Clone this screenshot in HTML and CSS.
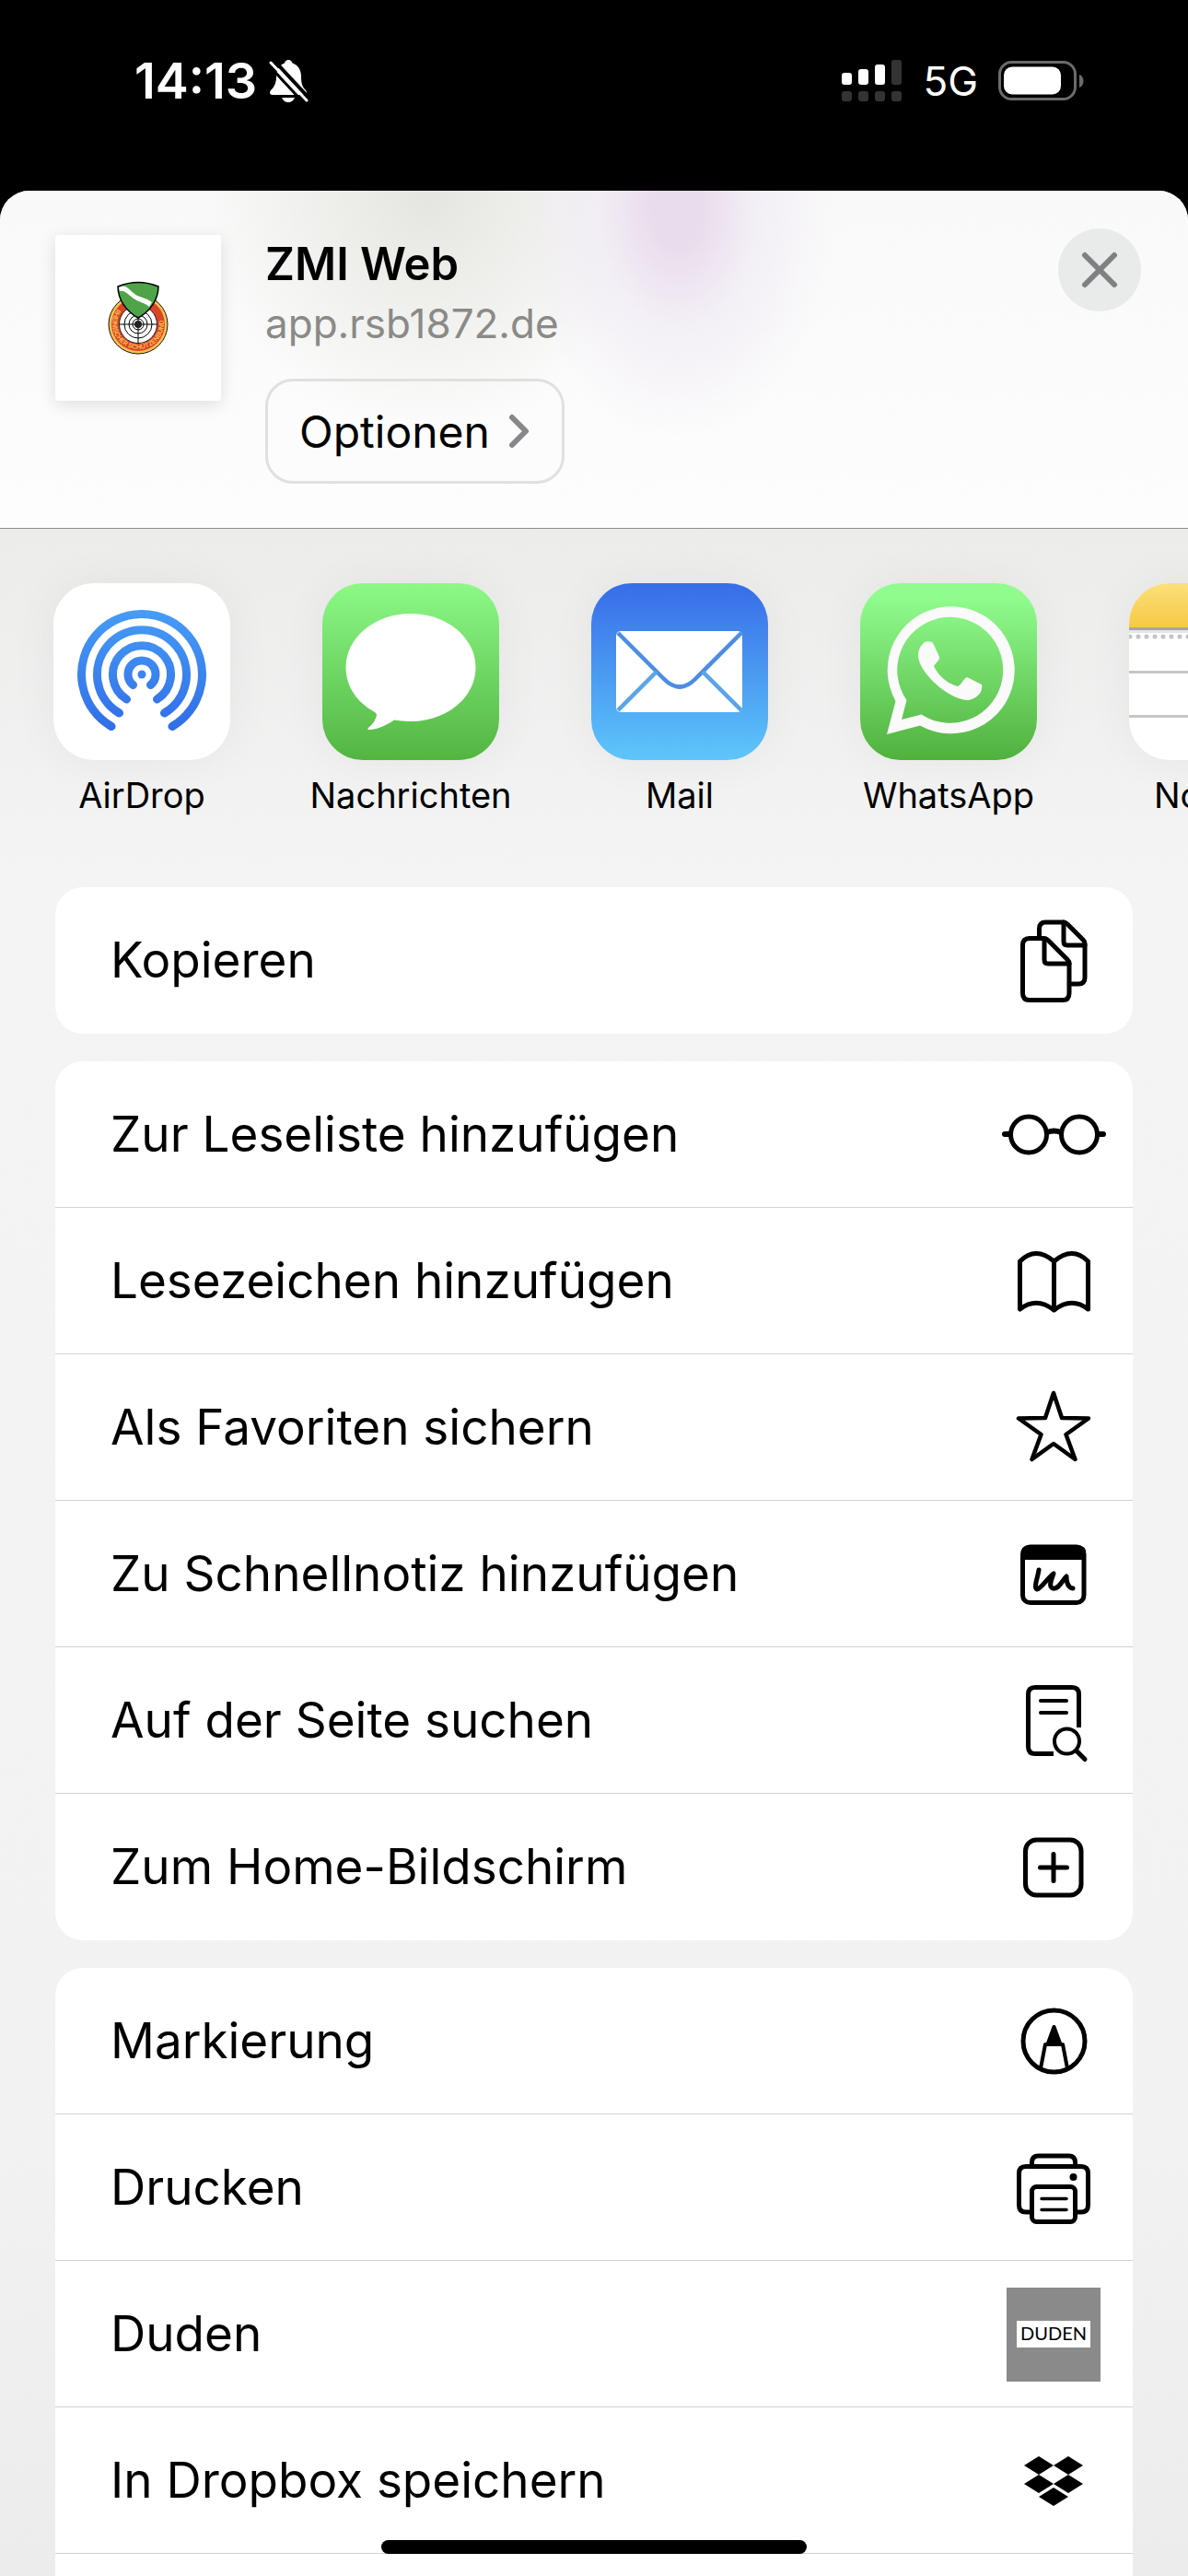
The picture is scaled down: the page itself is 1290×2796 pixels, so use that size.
FILE: index.html
```html
<!DOCTYPE html>
<html lang="de">
<head>
    <meta charset="UTF-8">
    <meta name="viewport" content="width=device-width, initial-scale=1.0">
    <title>ZMI Web</title>
    <link rel="stylesheet" href="styles.css">
</head>
<body>

<div class="status-bar">
    <div class="status-left">
        <span class="time">14:13</span>
        <svg width="44" height="48" viewBox="0 0 44 48">
            <path d="M22 1c3 0 4 2 4.500 3.500C33 7 36 12 36 19c0 9 2 12 5 15 2 3 1 5-2 5H6c-4 0-5-2-3-5 4-4 6-8 6-15C9 12 12 7 18 4.500 18.500 2.500 20 1 22 1z" fill="#fff"/>
            <path d="M15 42h14c-1 3-4 5-7 5s-6-2-7-5z" fill="#fff"/>
            <path d="M6 1l38 41" stroke="#000" stroke-width="4"/>
            <path d="M1 7l38 41" stroke="#000" stroke-width="3"/>
            <path d="M3 4l39 41" stroke="#fff" stroke-width="3" stroke-linecap="round"/>
        </svg>
    </div>
    <div class="status-right">
        <svg width="66" height="46" viewBox="0 0 66 46">
            <g fill="#fff">
                <rect x="0" y="14" width="11" height="13" rx="3"/>
                <rect x="18" y="10" width="11" height="17" rx="3"/>
                <rect x="36" y="5" width="11" height="22" rx="3"/>
            </g>
            <g fill="#333">
                <rect x="54" y="0" width="11" height="27" rx="3"/>
                <rect x="0" y="34" width="11" height="11" rx="3"/>
                <rect x="18" y="34" width="11" height="11" rx="3"/>
                <rect x="36" y="34" width="11" height="11" rx="3"/>
                <rect x="54" y="34" width="11" height="11" rx="3"/>
            </g>
        </svg>
        <span class="network">5G</span>
        <svg width="94" height="44" viewBox="0 0 94 44">
            <rect x="1.500" y="1.500" width="82" height="40" rx="13" fill="none" stroke="#6b6b6b" stroke-width="3"/>
            <rect x="6" y="6.500" width="62" height="30" rx="9" fill="#fff"/>
            <path d="M88 15c6 2 6 12 0 14z" fill="#6b6b6b"/>
        </svg>
    </div>
</div>

<div class="sheet">
    <header class="sheet-header">
        <div class="thumbnail">
            <svg width="180" height="180" viewBox="0 0 180 180">
                <circle cx="90" cy="97" r="32" fill="#f9c352" stroke="#1a1408" stroke-width="1"/>
                <circle cx="90" cy="97" r="29" fill="#da4527"/>
                <circle cx="90" cy="97" r="20.500" fill="#fff" stroke="#222"/>
                <path id="ring" d="M67 80a28 28 0 1 0 46 0" fill="none"/>
                <text class="ring-text"><textPath href="#ring">RHEINISCHER SCHÜTZENBUND</textPath></text>
                <g fill="none" stroke="#000" stroke-width="1">
                    <circle cx="90" cy="97" r="15"/>
                    <circle cx="90" cy="97" r="10"/>
                    <circle cx="90" cy="97" r="6"/>
                    <path d="M70 97h40M90 77v40"/>
                </g>
                <circle cx="90" cy="97" r="4" fill="#222"/>
                <path d="M68 56q22-9 44 0c0 14-9 27-22 34-13-7-22-20-22-34z" fill="#4fa447" stroke="#000" stroke-width="1.500"/>
                <path d="M69 57q5-3 9 0c5 4 8 8 14 10q7 2 13 6l-3 5c-6-5-11-5-17-9-7-5-9-9-15-8z" fill="#fff"/>
            </svg>
        </div>
        <div class="page-info">
            <h1>ZMI Web</h1>
            <p>app.rsb1872.de</p>
            <button class="options">
                Optionen
                <svg width="24" height="40" viewBox="0 0 24 40"><path d="M4 5l15 15-15 15" fill="none" stroke="#88888c" stroke-width="6" stroke-linecap="round" stroke-linejoin="round"/></svg>
            </button>
        </div>
        <button class="close" aria-label="Schließen">
            <svg width="40" height="40" viewBox="0 0 40 40"><path d="M4 4l32 32M36 4L4 36" stroke="#7f8082" stroke-width="6" stroke-linecap="round"/></svg>
        </button>
    </header>

    <div class="apps">
        <button class="app">
            <svg class="app-icon white" viewBox="0 0 192 192">
                <defs>
                    <linearGradient id="air" gradientUnits="userSpaceOnUse" x1="0" y1="28" x2="0" y2="162">
                        <stop offset="0" stop-color="#469df6"/>
                        <stop offset="1" stop-color="#316ce8"/>
                    </linearGradient>
                </defs>
                <g fill="none" stroke="url(#air)" stroke-width="9" stroke-linecap="round">
                    <path d="M63 155.500A65.500 65.500 0 1 1 129 155.500"/>
                    <path d="M71.500 141A48.500 48.500 0 1 1 120.500 141"/>
                    <path d="M79.500 126A31.500 31.500 0 1 1 112.500 126"/>
                    <path d="M86.500 110.500A15 15 0 1 1 105.500 110.500"/>
                </g>
                <circle cx="96" cy="99" r="4.500" fill="#3b84ef"/>
            </svg>
            <span>AirDrop</span>
        </button>
        <button class="app">
            <svg class="app-icon green" viewBox="0 0 192 192">
                <path d="M96 33c39 0 70.500 26 70.500 58.500S135 150 96 150c-7 0-13-1-18-1.500-9 6-17 10-27 10.500-2 0-2-1-1-2 5-4 8-9 9-14 0-1-1-2-2-3C38 130 25.500 112 25.500 91.500 25.500 59 57 33 96 33z" fill="#fff"/>
            </svg>
            <span>Nachrichten</span>
        </button>
        <button class="app">
            <svg class="app-icon blue" viewBox="0 0 192 192">
                <rect x="27" y="52" width="137" height="88" rx="5" fill="#fff"/>
                <g fill="none" stroke-width="4.500">
                    <path d="M29 54l50 50q17 17 34 0l50-50" stroke="#4b8de4"/>
                    <path d="M29 138l42-42M163 138l-42-42" stroke="#59a5e8"/>
                </g>
            </svg>
            <span>Mail</span>
        </button>
        <button class="app">
            <svg class="app-icon whatsapp" viewBox="0 0 192 192">
                <path fill-rule="evenodd" d="M29 164l9.500-36A69 69 0 1 1 65 154.500zM45 148l21.500-5.500A57.500 57.500 0 1 0 50.500 127z" fill="#fafafa"/>
                <path d="M70 64c2-1 6-1 8 0 1 1 2 3 3 5l5 11c1 3-5 8-6 10 5 11 15 19 26 22 3-1 7-9 10-10l16 8c2 8-6 16-15 17-25-2-54-33-54-48 0-7 3-12 7-15z" fill="#fafafa"/>
            </svg>
            <span>WhatsApp</span>
        </button>
        <button class="app">
            <svg class="app-icon white" viewBox="0 0 192 192">
                <defs>
                    <linearGradient id="pad" x1="0" y1="0" x2="0" y2="1">
                        <stop offset="0" stop-color="#fbe07a"/>
                        <stop offset="1" stop-color="#f6c944"/>
                    </linearGradient>
                </defs>
                <rect width="192" height="48" fill="url(#pad)"/>
                <rect y="48" width="192" height="3" fill="#a9a69c"/>
                <rect y="51" width="192" height="3" fill="#e6e6e6"/>
                <path d="M1 58h191" stroke="#c4c4c6" stroke-width="5" stroke-linecap="round" stroke-dasharray="0 9"/>
                <path d="M0 96.500h192M0 144.500h192" stroke="#c6c6c8" stroke-width="3"/>
            </svg>
            <span>Notizen</span>
        </button>
    </div>

    <div class="actions">
        <div class="card">
            <button class="row">
                Kopieren
                <svg class="icon" viewBox="0 0 120 120">
                    <path d="M44.500 34v-8q0-7 7-7H71q2 0 4 2l17 17q2 2 2 4v37q0 7-7 7H80"/>
                    <path d="M71 19v21q0 4 4 4h19"/>
                    <path d="M33 36.500h17q2 0 4 2l21 21q2 2 2 4V96q0 7.500-7 7.500H34q-7.500 0-7.500-7.500V44q0-7.500 7.500-7.500z"/>
                    <path d="M50 37v23q0 4 4 4h23"/>
                </svg>
            </button>
        </div>

        <div class="card">
            <button class="row">
                Zur Leseliste hinzufügen
                <svg class="icon" viewBox="0 0 120 120">
                    <circle cx="33" cy="60.500" r="19.500"/>
                    <circle cx="88" cy="60.500" r="19.500"/>
                    <path d="M53 58q7.500-3 15 0M7 60h5M109 60h5" stroke-width="6"/>
                </svg>
            </button>
            <button class="row">
                Lesezeichen hinzufügen
                <svg class="icon" viewBox="0 0 120 120">
                    <path d="M23.500 91V39q17-17 37 0 20-17 37 0v52q-18-14-37 1-19-15-37-1zM60.500 39v53"/>
                </svg>
            </button>
            <button class="row">
                Als Favoriten sichern
                <svg class="icon" viewBox="0 0 120 120">
                    <path d="M60 23l9 27 29 0.500-24.500 17.500 10 27-23.500-17-23.500 17 10-27L22 50.500 51 50z" stroke-width="4.500"/>
                </svg>
            </button>
            <button class="row">
                Zu Schnellnotiz hinzufügen
                <svg class="icon" viewBox="0 0 120 120">
                    <rect x="26.500" y="31" width="66.500" height="60.500" rx="8"/>
                    <path d="M25 45V37q0-7 7-7h56q7 0 7 7v8z" fill="#000" stroke="none"/>
                    <path d="M44 56c-1 8-6 19-2 21 5-1 12-13 18-17-2 6-6 14-1 16 6 2 11-9 15-13 0 6 1 12 7 13"/>
                </svg>
            </button>
            <button class="row">
                Auf der Seite suchen
                <svg class="icon" viewBox="0 0 120 120">
                    <path d="M87.500 68V32q0-7.500-7.500-7.500H40q-7.500 0-7.500 7.500v57q0 7.500 7.500 7.500h20" stroke-linecap="butt"/>
                    <path d="M46 39h28M46 52h28" stroke-width="4"/>
                    <circle cx="74.500" cy="83" r="13.500" stroke-width="4"/>
                    <path d="M85 93.500l9 9"/>
                </svg>
            </button>
            <button class="row">
                Zum Home-Bildschirm
                <svg class="icon" viewBox="0 0 120 120">
                    <rect x="29.500" y="31" width="60.500" height="60" rx="12"/>
                    <path d="M45.500 61h29M60 46.500v29"/>
                </svg>
            </button>
        </div>

        <div class="card">
            <button class="row">
                Markierung
                <svg class="icon" viewBox="0 0 120 120">
                    <circle cx="60.500" cy="60.500" r="33.500"/>
                    <path d="M46 90l5-26h19l5 26" stroke-width="4"/>
                    <path d="M60.500 45l7 19h-14z" fill="#000" stroke-width="4"/>
                </svg>
            </button>
            <button class="row">
                Drucken
                <svg class="icon" viewBox="0 0 120 120">
                    <path d="M34.500 87H30q-7.500 0-7.500-7.500V45q0-7.500 7.500-7.500h60q7.500 0 7.500 7.500v34.500q0 7.500-7.500 7.500h-4"/>
                    <path d="M36.500 37v-4q0-7 7-7h33q7 0 7 7v4"/>
                    <rect x="36.500" y="59.500" width="47" height="38" rx="5"/>
                    <path d="M47 72.500h27M47 84.500h27" stroke-width="3.500"/>
                    <circle cx="81.500" cy="49" r="4" fill="#000" stroke="none"/>
                </svg>
            </button>
            <button class="row">
                Duden
                <svg class="icon" viewBox="0 0 120 120">
                    <rect x="9" y="10" width="102" height="102" fill="#8a8a8a" stroke="none"/>
                    <rect x="20" y="46" width="80" height="29" fill="#fff" stroke="none"/>
                    <text class="duden-text" x="60" y="67" text-anchor="middle">DUDEN</text>
                </svg>
            </button>
            <button class="row">
                In Dropbox speichern
                <svg class="icon" viewBox="0 0 120 120">
                    <path d="M44 34l16 10-16 10-16-10zM76 34l16 10-16 10-16-10zM44 54l16 10-16 10-16-10zM76 54l16 10-16 10-16-10zM60 68l16 10-16 10-16-10z" fill="#000" stroke="none"/>
                </svg>
            </button>
            <div class="row"></div>
        </div>
    </div>
</div>

<div class="home-indicator"></div>

</body>
</html>
```
FILE: styles.css
```css
* {
    box-sizing: border-box;
}
body {
    font-family: Inter, "Liberation Sans", sans-serif;
    margin: 0;
    height: 100vh;
    overflow: hidden;
    background-color: #000;
    color: #000;
    display: flex;
    flex-direction: column;
}
button {
    font-family: inherit;
    color: inherit;
    background: none;
    border: 0;
    margin: 0;
    padding: 0;
}
svg {
    display: block;
    flex-shrink: 0;
}

/* status bar */
.status-bar {
    flex-shrink: 0;
    height: 207px;
    padding: 0 112px 32px 146px;
    display: flex;
    align-items: center;
    justify-content: space-between;
    color: #fff;
}
.status-left {
    display: flex;
    align-items: center;
    gap: 12px;
}
.status-right {
    display: flex;
    align-items: center;
    gap: 22px;
}
.time {
    font-size: 54px;
    font-weight: 600;
}
.network {
    font-size: 44px;
    font-weight: 400;
}

/* share sheet */
.sheet {
    flex: 1;
    min-height: 0;
    overflow: hidden;
    border-radius: 32px 32px 0 0;
    background: linear-gradient(#ececeb 366px, #f4f4f4 750px, #f2f2f2 2100px, #ececec);
}
.sheet-header {
    height: 367px;
    padding: 48px 51px 48px 60px;
    display: flex;
    align-items: flex-start;
    border-bottom: 1px solid #8e8e8e;
    background:
        radial-gradient(ellipse 170px 250px at 57% 20px, #e9dcec 15%, rgba(240, 234, 244, 0.7) 50%, rgba(251, 251, 251, 0)),
        radial-gradient(ellipse 240px 260px at 36% 0, #e5e5e0, rgba(251, 251, 251, 0)),
        linear-gradient(#f9f9f9, #fdfdfd);
}
.thumbnail {
    border-radius: 4px;
    background-color: #fff;
    box-shadow: 0 4px 18px rgba(0, 0, 0, 0.12);
}
.page-info {
    flex: 1;
    padding-left: 48px;
}
.page-info h1 {
    margin: 0;
    font-size: 49px;
    line-height: 64px;
    font-weight: 600;
}
.page-info p {
    margin: 0;
    font-size: 44px;
    line-height: 64px;
    color: #8a8a87;
}
.options {
    display: flex;
    align-items: center;
    gap: 20px;
    height: 114px;
    margin-top: 28px;
    padding: 0 34px;
    border: 3px solid #e0e0e0;
    border-radius: 30px;
    font-size: 48px;
}
.close {
    width: 90px;
    height: 90px;
    margin-top: -7px;
    border-radius: 50%;
    background-color: #e9eaea;
    display: flex;
    align-items: center;
    justify-content: center;
}

/* app row */
.apps {
    display: flex;
    gap: 100px;
    padding: 59px 0 0 58px;
    height: 389px;
}
.app {
    flex: 0 0 192px;
    min-width: 0;
    display: flex;
    flex-direction: column;
    align-items: center;
    justify-content: flex-start;
    gap: 14px;
    font-size: 38px;
    line-height: 48px;
    white-space: nowrap;
}
.app-icon {
    width: 192px;
    height: 192px;
    border-radius: 44px;
    box-shadow: 0 0 50px rgba(0, 0, 0, 0.05);
}
.white {
    background-color: #fff;
}
.green {
    background: linear-gradient(#8cf987, #53b541);
}
.blue {
    background: linear-gradient(#386ce8, #5ec6fa);
}
.whatsapp {
    background: linear-gradient(#90fc8e 8%, #50b13d);
}

/* action lists */
.actions {
    display: flex;
    flex-direction: column;
    gap: 30px;
    padding: 0 60px;
}
.card {
    border-radius: 30px;
    background-color: #fff;
    overflow: hidden;
}
.row {
    width: 100%;
    height: 159px;
    padding: 0 26px 0 60px;
    display: flex;
    align-items: center;
    justify-content: space-between;
    border-bottom: 1px solid #d2d2d2;
    font-size: 53px;
    text-align: left;
}
.row:last-child {
    border-bottom-color: transparent;
}
.icon {
    width: 120px;
    height: 120px;
    fill: none;
    stroke: #000;
    stroke-width: 5;
    stroke-linecap: round;
    stroke-linejoin: round;
}
.duden-text {
    font-family: Lato, sans-serif;
    font-size: 20px;
    fill: #000;
    stroke: none;
}
.ring-text {
    font-size: 7px;
    font-weight: 600;
    fill: #f9c352;
}

.home-indicator {
    position: absolute;
    left: 50%;
    bottom: 24px;
    width: 462px;
    height: 15px;
    margin-left: -231px;
    border-radius: 8px;
    background-color: #000;
}
```
